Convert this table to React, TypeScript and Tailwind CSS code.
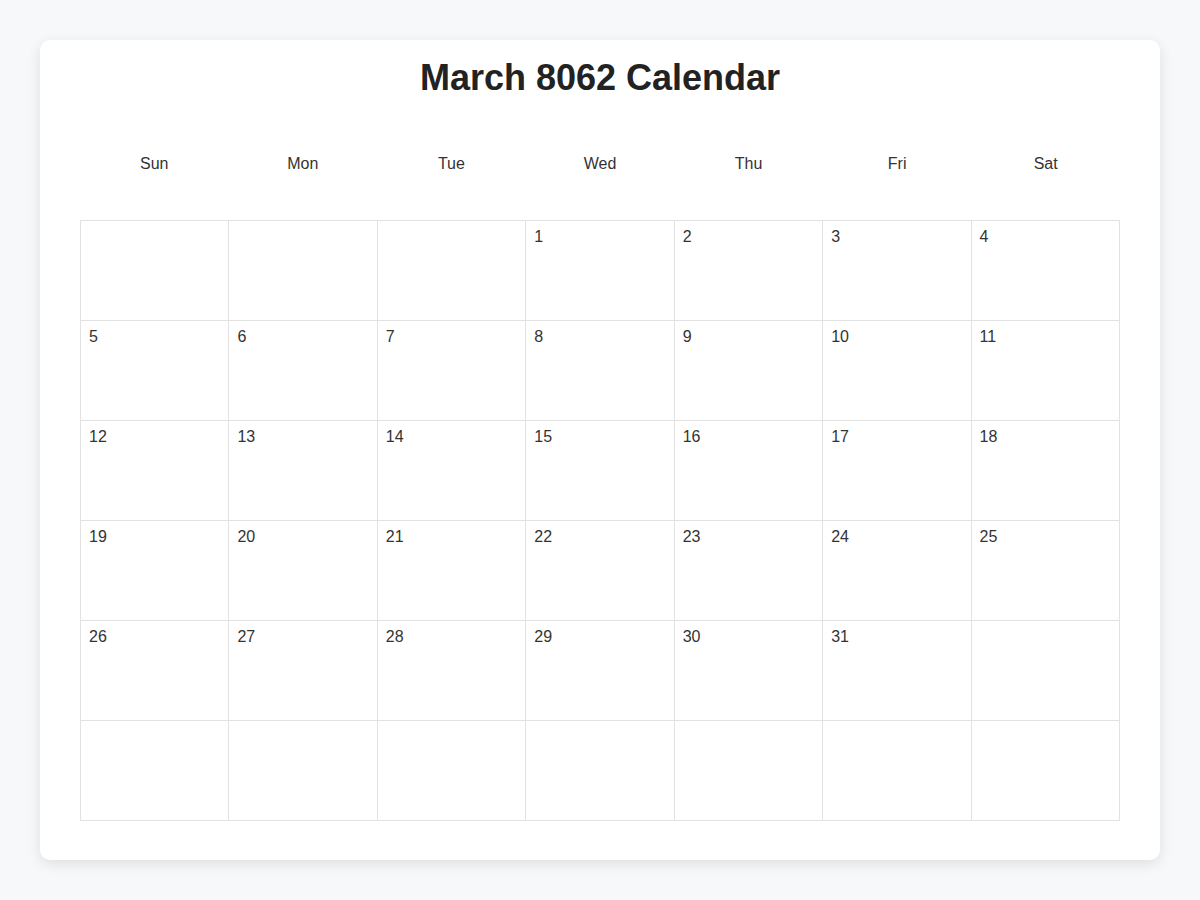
import React from 'react';

const DAYS = ['Sun', 'Mon', 'Tue', 'Wed', 'Thu', 'Fri', 'Sat'];

// March 8062 starts on a Wednesday; 6 weeks shown
const buildCells = (): (number | null)[] => {
  const cells: (number | null)[] = [];
  const offset = 3;
  for (let i = 0; i < offset; i++) cells.push(null);
  for (let d = 1; d <= 31; d++) cells.push(d);
  while (cells.length < 42) cells.push(null);
  return cells;
};

const App: React.FC = () => {
  const cells = buildCells();

  return (
    <div className="min-h-[900px] bg-[#f7f8fa] p-10 font-['Liberation_Sans',Arial,sans-serif] text-[#333]">
      <div className="h-[820px] bg-white rounded-[10px] shadow-[0_4px_14px_rgba(0,0,0,0.1)] px-10 pt-[17px] pb-10">
        {/* Titulo */}
        <h1 className="text-center text-[36px] font-bold text-[#222] leading-[41px]">
          March 8062 Calendar
        </h1>

        {/* Cabecera de dias */}
        <div className="grid grid-cols-7 mt-[57px]">
          {DAYS.map((d) => (
            <div key={d} className="text-center text-[16px] leading-[18px]">
              {d}
            </div>
          ))}
        </div>

        {/* Rejilla */}
        <div className="grid grid-cols-7 mt-[47px] border-t border-l border-[#e2e2e2]">
          {cells.map((day, i) => (
            <div
              key={i}
              className="h-[100px] border-r border-b border-[#e2e2e2] px-2 pt-[7px] text-[16px] leading-[18px]"
            >
              {day ?? ''}
            </div>
          ))}
        </div>
      </div>
    </div>
  );
};

export default App;
